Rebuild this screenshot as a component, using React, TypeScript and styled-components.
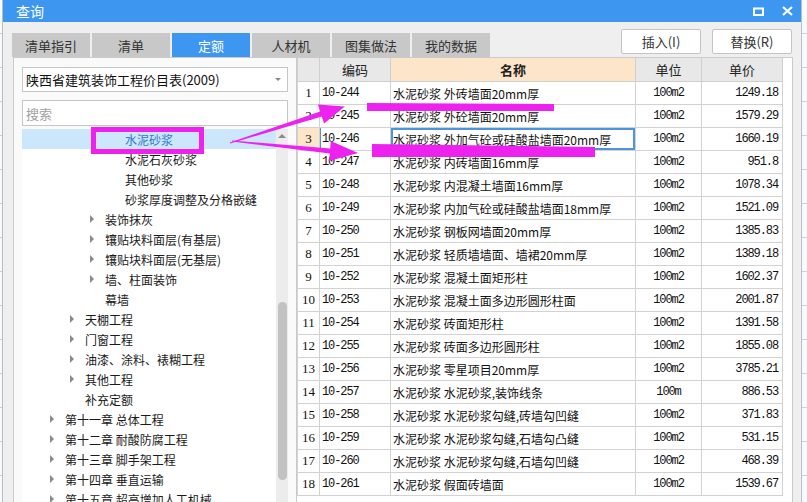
import React from "react";
import styled, { createGlobalStyle } from "styled-components";

const GlobalStyle = createGlobalStyle`
  html, body {
    margin: 0;
    padding: 0;
    background: #eef2f6;
  }
  body {
    font-family: "Noto Sans CJK SC", "Noto Sans", sans-serif;
    color: #222;
  }
`;

const MAGENTA = "#ee22ee";
const BLUE = "#3d97f0";

const Screen = styled.div`
  position: relative;
  width: 807px;
  height: 502px;
  overflow: hidden;
  display: flex;
`;

const SideStrip = styled.div<{ $w: number; $side: "left" | "right" }>`
  width: ${({ $w }) => $w}px;
  flex-shrink: 0;
  background: repeating-linear-gradient(
    to bottom,
    #f7f9fb 0px,
    #f7f9fb 33px,
    #c9d2dc 33px,
    #c9d2dc 34px
  );
  border-${({ $side }) => ($side === "left" ? "right" : "left")}: 1px solid #b8bec6;
`;

const Dialog = styled.div`
  width: 798px;
  flex-shrink: 0;
  display: flex;
  flex-direction: column;
  background: #efefef;
`;

const TitleBar = styled.div`
  height: 22px;
  background: ${BLUE};
  display: flex;
  align-items: center;
  padding: 0 8px 0 13px;
  color: #fff;
  font-size: 14px;
`;

const TitleText = styled.span`
  flex: 1;
`;

const WinButtons = styled.div`
  display: flex;
  gap: 18px;
  align-items: center;
`;

const Toolbar = styled.div`
  height: 35px;
  display: flex;
  padding: 0 9px 0 9px;
`;

const Tabs = styled.div`
  display: flex;
  gap: 2px;
  align-self: flex-end;
`;

const Tab = styled.div<{ $active?: boolean }>`
  width: 78px;
  height: 24px;
  display: flex;
  align-items: center;
  justify-content: center;
  font-size: 13px;
  background: ${({ $active }) => ($active ? BLUE : "#c8c8c8")};
  color: ${({ $active }) => ($active ? "#fff" : "#333")};
`;

const ButtonGroup = styled.div`
  margin-left: auto;
  margin-top: 7px;
  display: flex;
  gap: 11px;
  align-self: flex-start;
`;

const ActionButton = styled.button`
  width: 80px;
  height: 25px;
  background: #fff;
  border: 1px solid #c4c4c4;
  border-radius: 2px;
  font-family: "Noto Sans CJK SC", "Noto Sans", sans-serif;
  font-size: 13px;
  color: #333;
  padding: 0;
`;

const Content = styled.div`
  flex: 1;
  display: flex;
  padding: 0 8px 0 10px;
  min-height: 0;
`;

const LeftPanel = styled.div`
  width: 266px;
  border: 1px solid #cacaca;
  border-bottom: none;
  background: #fafafa;
  padding: 9px 8px 0 8px;
  display: flex;
  flex-direction: column;
`;

const Select = styled.div`
  height: 23px;
  border: 1px solid #c6c6c6;
  background: #fff;
  display: flex;
  align-items: center;
  padding: 0 6px 0 3px;
  font-size: 13px;
  color: #111;
`;

const SelectText = styled.span`
  flex: 1;
`;

const SelectArrow = styled.span`
  width: 0;
  height: 0;
  border-left: 3px solid transparent;
  border-right: 3px solid transparent;
  border-top: 3px solid #888;
`;

const SearchBox = styled.div`
  margin-top: 8px;
  height: 24px;
  border: 1px solid #c6c6c6;
  background: #fff;
  display: flex;
  align-items: center;
  padding: 0 3px;
  font-size: 13px;
  color: #a0a0a0;
`;

const TreeArea = styled.div`
  margin-top: 3px;
  flex: 1;
  display: flex;
  background: #fff;
  min-height: 0;
`;

const TreeRows = styled.div`
  flex: 1;
  display: flex;
  flex-direction: column;
`;

const TreeRow = styled.div<{ $level: number; $selected?: boolean }>`
  height: 20px;
  flex-shrink: 0;
  display: flex;
  align-items: center;
  padding-left: ${({ $level }) => 28 + $level * 20}px;
  font-size: 12px;
  background: ${({ $selected }) => ($selected ? "#cce6fb" : "transparent")};
  color: ${({ $selected }) => ($selected ? "#2f78d0" : "#1a1a1a")};
  white-space: nowrap;
`;

const Caret = styled.span<{ $show: boolean }>`
  width: 15px;
  flex-shrink: 0;
  display: flex;
  align-items: center;
  &::before {
    content: "";
    display: ${({ $show }) => ($show ? "block" : "none")};
    width: 0;
    height: 0;
    border-top: 4px solid transparent;
    border-bottom: 4px solid transparent;
    border-left: 4px solid #8a8a8a;
  }
`;

const ScrollTrack = styled.div`
  width: 12px;
  background: #ececec;
  display: flex;
  flex-direction: column;
  align-items: center;
`;

const ScrollUp = styled.span`
  margin-top: 5px;
  width: 0;
  height: 0;
  border-left: 4px solid transparent;
  border-right: 4px solid transparent;
  border-bottom: 4px solid #8a8a8a;
`;

const ScrollThumb = styled.div`
  margin-top: 164px;
  width: 9px;
  height: 178px;
  border-radius: 5px;
  background: #c2c2c2;
`;

const RightPanel = styled.div`
  flex: 1;
  background: #fff;
  border: 1px solid #cacaca;
  border-bottom: none;
  border-left: none;
  overflow: hidden;
`;

const Table = styled.table`
  border-collapse: collapse;
  table-layout: fixed;
  width: 481px;
`;

const HeadCell = styled.th<{ $accent?: boolean; $w: number }>`
  width: ${({ $w }) => $w}px;
  height: 23px;
  padding: 0;
  border: 1px solid #cfcfcf;
  border-top: none;
  background: ${({ $accent }) => ($accent ? "#fde5c9" : "#e8e8e8")};
  font-size: 13px;
  font-weight: ${({ $accent }) => ($accent ? 700 : 400)};
  color: #222;
  text-align: center;
`;

const Cell = styled.td<{
  $align?: "left" | "center" | "right";
  $mono?: boolean;
  $tint?: boolean;
  $focus?: boolean;
  $mark?: boolean;
}>`
  height: 22px;
  padding: 0 ${({ $align }) => ($align === "right" ? "4px" : "2px")};
  border: 1px solid #d2d2d2;
  background: ${({ $tint }) => ($tint ? "#fde5c9" : "#fff")};
  text-align: ${({ $align }) => $align ?? "left"};
  white-space: nowrap;
  overflow: hidden;
  color: #111;
  font-family: ${({ $mono }) =>
    $mono
      ? `"Liberation Mono", "DejaVu Sans Mono", monospace`
      : `"Noto Sans CJK SC", "Noto Sans", sans-serif`};
  font-size: 12px;
  letter-spacing: ${({ $mono }) => ($mono ? "-1.1px" : "0")};
  box-shadow: ${({ $focus, $mark }) =>
    $focus
      ? "inset 0 0 0 2px #4d94e0"
      : $mark
      ? "inset 1px 0 0 #4d94e0"
      : "none"};
`;

const NumCell = styled(Cell)`
  font-family: "Liberation Serif", "DejaVu Serif", serif;
  font-size: 13px;
  letter-spacing: 0;
  padding: 0;
`;

const Overlay = styled.svg`
  position: absolute;
  top: 0;
  left: 0;
  pointer-events: none;
`;

type TreeItem = {
  label: string;
  level: number;
  caret?: boolean;
  selected?: boolean;
};

const treeItems: TreeItem[] = [
  { label: "水泥砂浆", level: 3, selected: true },
  { label: "水泥石灰砂浆", level: 3 },
  { label: "其他砂浆", level: 3 },
  { label: "砂浆厚度调整及分格嵌缝", level: 3 },
  { label: "装饰抹灰", level: 2, caret: true },
  { label: "镶贴块料面层(有基层)", level: 2, caret: true },
  { label: "镶贴块料面层(无基层)", level: 2, caret: true },
  { label: "墙、柱面装饰", level: 2, caret: true },
  { label: "幕墙", level: 2 },
  { label: "天棚工程", level: 1, caret: true },
  { label: "门窗工程", level: 1, caret: true },
  { label: "油漆、涂料、裱糊工程", level: 1, caret: true },
  { label: "其他工程", level: 1, caret: true },
  { label: "补充定额", level: 1 },
  { label: "第十一章 总体工程", level: 0, caret: true },
  { label: "第十二章 耐酸防腐工程", level: 0, caret: true },
  { label: "第十三章 脚手架工程", level: 0, caret: true },
  { label: "第十四章 垂直运输", level: 0, caret: true },
  { label: "第十五章 超高增加人工机械", level: 0, caret: true },
];

type Quota = [string, string, string, string];

const quotas: Quota[] = [
  ["10-244", "水泥砂浆 外砖墙面20mm厚", "100m2", "1249.18"],
  ["10-245", "水泥砂浆 外砼墙面20mm厚", "100m2", "1579.29"],
  ["10-246", "水泥砂浆 外加气砼或硅酸盐墙面20mm厚", "100m2", "1660.19"],
  ["10-247", "水泥砂浆 内砖墙面16mm厚", "100m2", "951.8"],
  ["10-248", "水泥砂浆 内混凝土墙面16mm厚", "100m2", "1078.34"],
  ["10-249", "水泥砂浆 内加气砼或硅酸盐墙面18mm厚", "100m2", "1521.09"],
  ["10-250", "水泥砂浆 钢板网墙面20mm厚", "100m2", "1385.83"],
  ["10-251", "水泥砂浆 轻质墙墙面、墙裙20mm厚", "100m2", "1389.18"],
  ["10-252", "水泥砂浆 混凝土面矩形柱", "100m2", "1602.37"],
  ["10-253", "水泥砂浆 混凝土面多边形圆形柱面", "100m2", "2001.87"],
  ["10-254", "水泥砂浆 砖面矩形柱", "100m2", "1391.58"],
  ["10-255", "水泥砂浆 砖面多边形圆形柱", "100m2", "1855.08"],
  ["10-256", "水泥砂浆 零星项目20mm厚", "100m2", "3785.21"],
  ["10-257", "水泥砂浆 水泥砂浆,装饰线条", "100m", "886.53"],
  ["10-258", "水泥砂浆 水泥砂浆勾缝,砖墙勾凹缝", "100m2", "371.83"],
  ["10-259", "水泥砂浆 水泥砂浆勾缝,石墙勾凸缝", "100m2", "531.15"],
  ["10-260", "水泥砂浆 水泥砂浆勾缝,石墙勾凹缝", "100m2", "468.39"],
  ["10-261", "水泥砂浆 假面砖墙面", "100m2", "1539.67"],
];

const tabs = ["清单指引", "清单", "定额", "人材机", "图集做法", "我的数据"];

const CURRENT_ROW = 3;

export default function App() {
  return (
    <Screen>
      <GlobalStyle />
      <SideStrip $w={2} $side="left" />
      <Dialog>
        <TitleBar>
          <TitleText>查询</TitleText>
          <WinButtons>
            <svg width="11" height="9" viewBox="0 0 11 9">
              <rect x="1" y="1.5" width="9" height="6.5" fill="none" stroke="#fff" strokeWidth="2" />
            </svg>
            <svg width="11" height="10" viewBox="0 0 11 10">
              <path d="M1 1 L10 9 M10 1 L1 9" stroke="#fff" strokeWidth="2.2" />
            </svg>
          </WinButtons>
        </TitleBar>

        <Toolbar>
          <Tabs>
            {tabs.map((t) => (
              <Tab key={t} $active={t === "定额"}>
                {t}
              </Tab>
            ))}
          </Tabs>
          <ButtonGroup>
            <ActionButton>插入(I)</ActionButton>
            <ActionButton>替换(R)</ActionButton>
          </ButtonGroup>
        </Toolbar>

        <Content>
          <LeftPanel>
            <Select>
              <SelectText>陕西省建筑装饰工程价目表(2009)</SelectText>
              <SelectArrow />
            </Select>
            <SearchBox>搜索</SearchBox>
            <TreeArea>
              <TreeRows>
                {treeItems.map((item) => (
                  <TreeRow key={item.label} $level={item.level} $selected={item.selected}>
                    <Caret $show={!!item.caret} />
                    {item.label}
                  </TreeRow>
                ))}
              </TreeRows>
              <ScrollTrack>
                <ScrollUp />
                <ScrollThumb />
              </ScrollTrack>
            </TreeArea>
          </LeftPanel>

          <RightPanel>
            <Table>
              <thead>
                <tr>
                  <HeadCell $w={21} />
                  <HeadCell $w={70}>编码</HeadCell>
                  <HeadCell $w={244} $accent>
                    名称
                  </HeadCell>
                  <HeadCell $w={65}>单位</HeadCell>
                  <HeadCell $w={80}>单价</HeadCell>
                </tr>
              </thead>
              <tbody>
                {quotas.map(([code, name, unit, price], i) => {
                  const no = i + 1;
                  const current = no === CURRENT_ROW;
                  return (
                    <tr key={code}>
                      <NumCell $align="center" $tint={current}>
                        {no}
                      </NumCell>
                      <Cell $mono $mark={current}>
                        {code}
                      </Cell>
                      <Cell $focus={current}>{name}</Cell>
                      <Cell $mono $align="center">
                        {unit}
                      </Cell>
                      <Cell $mono $align="right">
                        {price}
                      </Cell>
                    </tr>
                  );
                })}
              </tbody>
            </Table>
          </RightPanel>
        </Content>
      </Dialog>
      <SideStrip $w={7} $side="right" />

      {/* hand-drawn annotation marks */}
      <Overlay width="807" height="502" viewBox="0 0 807 502">
        <rect x="93.5" y="129.5" width="108" height="22" fill="none" stroke={MAGENTA} strokeWidth="5" />
        <polygon points="367,103 554,104 554,111 367,111" fill={MAGENTA} />
        <polygon points="372,144 595,147 595,157 372,157" fill={MAGENTA} />
        <polygon
          points="229.8,142.5 320.2,111.6 317.9,104.5 344.8,106.4 324.1,123.5 321.8,116.4 230.2,143.5"
          fill={MAGENTA}
        />
        <polygon
          points="232,140.5 330.2,148.5 330.8,141 358,153 329.2,161 329.8,153.5 232,141.5"
          fill={MAGENTA}
        />
      </Overlay>
    </Screen>
  );
}
